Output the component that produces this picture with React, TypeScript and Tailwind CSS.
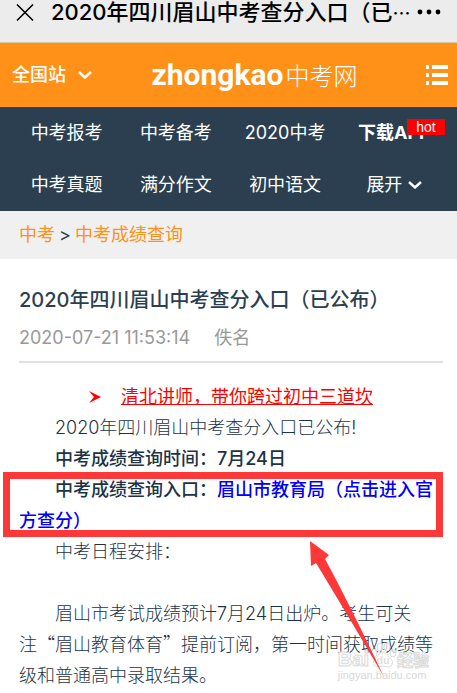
import React from "react";

const CJK = "font-['Noto_Sans_CJK_SC',sans-serif]";

const navItems = ["中考报考", "中考备考", "2020中考", "下载APP", "中考真题", "满分作文", "初中语文", "展开"];

function Chevron() {
  return (
    <svg className="h-2 w-3.5" viewBox="0 0 14 8" fill="none" stroke="currentColor" strokeWidth="2.4" aria-hidden="true">
      <path d="M1 1 L7 6.5 L13 1" />
    </svg>
  );
}

function TitleBar() {
  return (
    <div className="flex h-[43px] items-start border-b border-[#dcc6a8] bg-[#ececec] pl-4 pr-4 text-black">
      <button type="button" aria-label="关闭" className="mt-1 w-[35px] shrink-0">
        <svg className="h-[17px] w-[18px]" viewBox="0 0 18 17" fill="none" stroke="currentColor" strokeWidth="1.5">
          <path d="M1 0.5 L17 16.5 M17 0.5 L1 16.5" />
        </svg>
      </button>
      <div className="min-w-0 flex-1 whitespace-nowrap text-[22px] font-medium leading-6">
        2020年四川眉山中考查分入口（已<span className={`text-lg leading-none ${CJK}`}>…</span>
      </div>
      <button type="button" aria-label="更多" className="mt-2 shrink-0">
        <svg className="h-2 w-6" viewBox="0 0 24 8" fill="currentColor">
          <circle cx="3" cy="4" r="2.4" />
          <circle cx="12" cy="4" r="2.4" />
          <circle cx="21" cy="4" r="2.4" />
        </svg>
      </button>
    </div>
  );
}

function SiteHeader() {
  return (
    <header className="flex h-16 items-center justify-between bg-[#ff9119] pl-3 pr-2 text-white">
      <button type="button" className="flex w-24 items-center gap-3 text-lg font-medium">
        全国站
        <Chevron />
      </button>
      <a href="#home" className="flex items-center gap-0.5 pl-4 font-['Roboto','Noto_Sans_CJK_SC',sans-serif] text-[30px] font-bold leading-8">
        zhongkao<span className={`text-2xl font-light ${CJK}`}>中考网</span>
      </a>
      <button type="button" aria-label="菜单" className="flex w-16 justify-end">
        <svg className="h-5 w-6" viewBox="0 0 24 20" fill="currentColor">
          <path d="M1 0h3v4H1zM7 0h16v4H7zM1 8h3v4H1zM7 8h16v4H7zM1 16h3v4H1zM7 16h16v4H7z" />
        </svg>
      </button>
    </header>
  );
}

function Nav() {
  return (
    <nav className="grid grid-cols-4 bg-[#2b3f50] pl-3 pr-2 text-lg text-white">
      {navItems.map((item) => {
        if (item === "展开") {
          return (
            <button key={item} type="button" className="flex h-[52px] items-center justify-center gap-1.5">
              {item}
              <Chevron />
            </button>
          );
        }
        if (item === "下载APP") {
          return (
            <a key={item} href="#app" className="relative flex h-[52px] items-center justify-center font-bold">
              {item}
              <span className="absolute right-1 top-3 h-4 w-[38px] bg-[#ff0000] text-center font-['Liberation_Sans',sans-serif] text-sm font-normal leading-4">
                hot
              </span>
            </a>
          );
        }
        return (
          <a key={item} href="#nav" className="flex h-[52px] items-center justify-center">
            {item}
          </a>
        );
      })}
    </nav>
  );
}

function Watermark() {
  return (
    <div className="absolute bottom-2.5 right-7 font-['Liberation_Sans',sans-serif]" aria-hidden="true">
      <div className="flex items-end justify-end text-xl font-bold leading-5 text-white/70 [-webkit-text-stroke:1px_#dadada]">
        Bai
        <svg className="h-7 w-7" viewBox="0 0 28 28" fill="#ffffff" fillOpacity="0.7" stroke="#dadada">
          <ellipse cx="5" cy="12" rx="3" ry="4" />
          <ellipse cx="11" cy="6" rx="3" ry="4" />
          <ellipse cx="18" cy="6" rx="3" ry="4" />
          <ellipse cx="24" cy="12" rx="3" ry="4" />
          <path d="M14 11c-4 0-5 5-8 7-3 3-1 8 3 8 2 0 3-1 5-1s3 1 5 1c4 0 6-5 3-8-3-2-4-7-8-7z" />
          <text x="14" y="23" textAnchor="middle" fontSize="11" fontWeight="bold" fill="#d0d0d0" stroke="none">du</text>
        </svg>
        <span className={`text-base leading-5 ${CJK}`}>经验</span>
      </div>
      <div className="text-[11px] leading-3 text-[#d8d8d8]">jingyan.baidu.com</div>
    </div>
  );
}

export default function App() {
  return (
    <div lang="zh-CN" className="min-h-screen bg-white font-['Inter','Noto_Sans_CJK_SC',sans-serif] text-[#2b3f50]">
      <TitleBar />
      <SiteHeader />
      <Nav />
      <div className="flex h-12 items-center gap-1 bg-[#f0f0f0] px-[19px] text-lg">
        <a href="#zk" className="text-[#ff9119]">中考</a>
        <span>&gt;</span>
        <a href="#cj" className="text-[#ff9119]">中考成绩查询</a>
      </div>
      <main className="relative px-[19px] pr-3.5 pt-[25px]">
        <h1 className="text-xl font-medium leading-8">2020年四川眉山中考查分入口（已公布）</h1>
        <div className="flex gap-6 border-b-2 border-[#e0e0e0] pb-[9px] pt-2 text-lg leading-7 text-[#999999]">
          <time>2020-07-21 11:53:14</time>
          <span>佚名</span>
        </div>
        <article className="pt-[18px] text-lg font-light leading-[31px] text-[#1c3347]">
          <p className="flex items-center justify-center gap-5 text-[#ff0000]">
            <svg className="h-3 w-3" viewBox="0 0 12 12" fill="currentColor" aria-hidden="true">
              <path d="M0 0 L12 6 L0 12 L5 6 Z" />
            </svg>
            <a href="#course" className="font-normal underline">清北讲师，带你跨过初中三道坎</a>
          </p>
          <p className="indent-9">2020年四川眉山中考查分入口已公布!</p>
          <p className="indent-9 font-medium">中考成绩查询时间：7月24日</p>
          <p className="relative indent-9 font-medium">
            中考成绩查询入口：<a href="#entry" className="text-[#0000ff]">眉山市教育局（点击进入官方查分）</a>
            <span className="absolute -bottom-px -left-4 -top-0.5 right-0 border-[7px] border-[#fc3838]" />
          </p>
          <p className="indent-9">中考日程安排：</p>
          <p className="mt-[31px] indent-9">
            眉山市考试成绩预计7月24日出炉。考生可关<span className="inline-block indent-0">注<span className={`leading-none ${CJK}`}>“</span></span>眉山教育体育<span className={`leading-none ${CJK}`}>”</span>提前订阅，第一时间获取成绩等级和普通高中录取结果。
          </p>
        </article>
        <Watermark />
        <svg className="absolute bottom-3.5 right-[72px] h-[136px] w-[76px]" viewBox="0 0 76 136" fill="#fc3838" aria-hidden="true">
          <path d="M1 0 L20 14 L16 18 Q40 62 75 136 Q35 68 7 22 L2 25 Z" />
        </svg>
      </main>
    </div>
  );
}
